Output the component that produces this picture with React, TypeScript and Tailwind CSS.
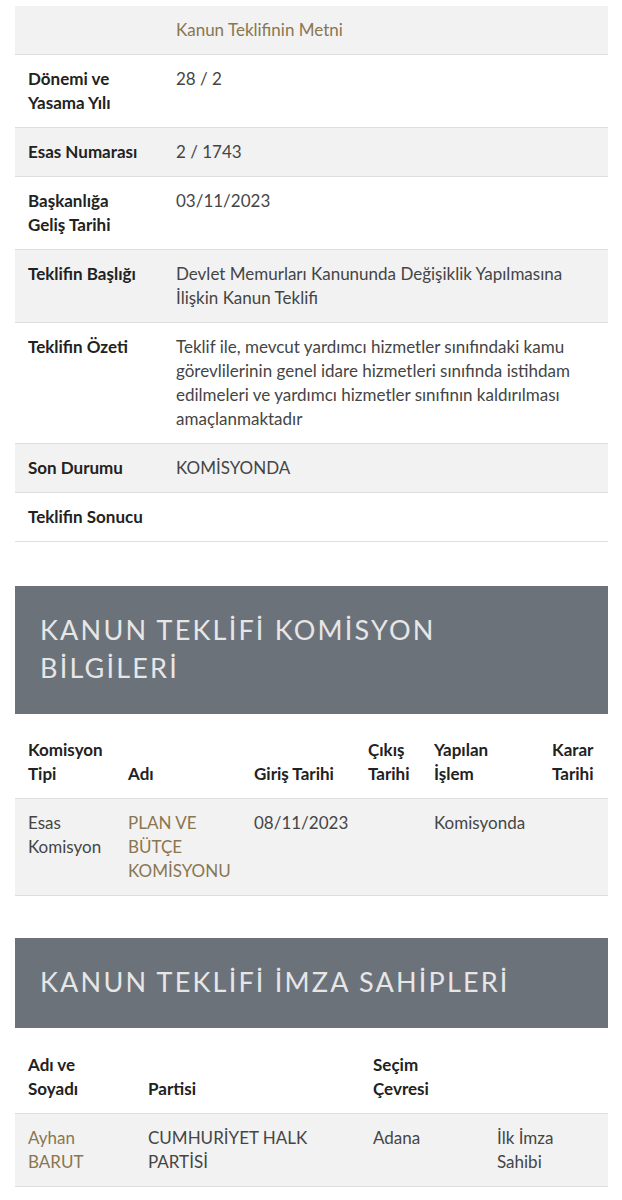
const font = { fontFamily: 'Lato, "Open Sans", sans-serif' };

type Row = { label: React.ReactNode; value: React.ReactNode; link?: boolean };

const infoRows: Row[] = [
  { label: '', value: 'Kanun Teklifinin Metni', link: true },
  { label: <>Dönemi ve<br />Yasama Yılı</>, value: '28 / 2' },
  { label: 'Esas Numarası', value: '2 / 1743' },
  { label: <>Başkanlığa<br />Geliş Tarihi</>, value: '03/11/2023' },
  {
    label: 'Teklifin Başlığı',
    value: <>Devlet Memurları Kanununda Değişiklik Yapılmasına<br />İlişkin Kanun Teklifi</>,
  },
  {
    label: 'Teklifin Özeti',
    value: (
      <>
        Teklif ile, mevcut yardımcı hizmetler sınıfındaki kamu<br />
        görevlilerinin genel idare hizmetleri sınıfında istihdam<br />
        edilmeleri ve yardımcı hizmetler sınıfının kaldırılması<br />
        amaçlanmaktadır
      </>
    ),
  },
  { label: 'Son Durumu', value: 'KOMİSYONDA' },
  { label: 'Teklifin Sonucu', value: '' },
];

function SectionTitle({ children }: { children: React.ReactNode }) {
  return (
    <div className="bg-[#6b727a] px-[25px] pt-[25px] pb-[27px]">
      <h2 className="text-[27px] leading-[38px] tracking-[2.2px] text-[#e6e6e6] font-normal whitespace-nowrap">{children}</h2>
    </div>
  );
}

const cell = 'px-[13px] py-[12px]';

export default function App() {
  return (
    <div className="min-h-screen bg-white pt-[6px] pl-[15px] pr-[14px] text-[17px] leading-[24px] text-[#454545]" style={font}>
      {/* bilgi tablosu */}
      <div className="border-b border-[#dedede]">
        {infoRows.map((r, i) => (
          <div
            key={i}
            className={`grid grid-cols-[148px_1fr] ${i > 0 ? 'border-t border-[#dedede]' : ''} ${i % 2 === 0 ? 'bg-[#f2f2f2]' : 'bg-white'}`}
          >
            <div className={`${cell} font-bold text-[#222] whitespace-nowrap`}>{r.label}</div>
            <div className={`${cell} whitespace-nowrap ${r.link ? 'text-[#8a7650]' : ''}`}>{r.value}</div>
          </div>
        ))}
      </div>

      <div className="mt-[44px]">
        <SectionTitle>
          KANUN TEKLİFİ KOMİSYON
          <br />
          BİLGİLERİ
        </SectionTitle>
        <div className="mt-[12px] border-b border-[#dedede]">
          <div className="grid grid-cols-[100px_126px_114px_66px_118px_69px] items-end border-b border-[#dedede] font-bold text-[#222] whitespace-nowrap">
            <div className={cell}>Komisyon<br />Tipi</div>
            <div className={cell}>Adı</div>
            <div className={cell}>Giriş Tarihi</div>
            <div className={cell}>Çıkış<br />Tarihi</div>
            <div className={cell}>Yapılan<br />İşlem</div>
            <div className={cell}>Karar<br />Tarihi</div>
          </div>
          <div className="grid grid-cols-[100px_126px_114px_66px_118px_69px] bg-[#f2f2f2] whitespace-nowrap">
            <div className={cell}>Esas<br />Komisyon</div>
            <div className={`${cell} text-[#8a7650]`}>PLAN VE<br />BÜTÇE<br />KOMİSYONU</div>
            <div className={cell}>08/11/2023</div>
            <div className={cell}></div>
            <div className={cell}>Komisyonda</div>
            <div className={cell}></div>
          </div>
        </div>
      </div>

      <div className="mt-[42px]">
        <SectionTitle>KANUN TEKLİFİ İMZA SAHİPLERİ</SectionTitle>
        <div className="mt-[13px] border-b border-[#dedede]">
          <div className="grid grid-cols-[120px_225px_124px_124px] items-end border-b border-[#dedede] font-bold text-[#222] whitespace-nowrap">
            <div className={cell}>Adı ve<br />Soyadı</div>
            <div className={cell}>Partisi</div>
            <div className={cell}>Seçim<br />Çevresi</div>
            <div className={cell}></div>
          </div>
          <div className="grid grid-cols-[120px_225px_124px_124px] bg-[#f2f2f2] whitespace-nowrap">
            <div className={`${cell} text-[#8a7650]`}>Ayhan<br />BARUT</div>
            <div className={cell}>CUMHURİYET HALK<br />PARTİSİ</div>
            <div className={cell}>Adana</div>
            <div className={cell}>İlk İmza<br />Sahibi</div>
          </div>
        </div>
      </div>
    </div>
  );
}
